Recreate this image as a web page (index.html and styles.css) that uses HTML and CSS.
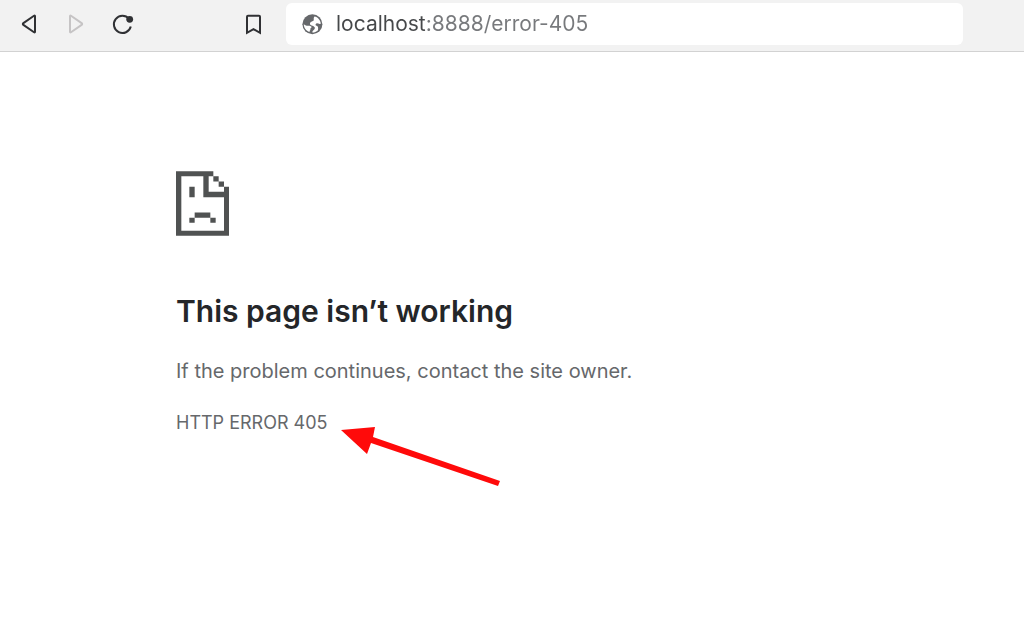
FILE: index.html
```html
<!DOCTYPE html>
<html lang="en">
<head>
<meta charset="utf-8">
<meta name="viewport" content="width=device-width, initial-scale=1">
<title>localhost</title>
<link rel="stylesheet" href="styles.css">
</head>
<body>
<header class="toolbar">
  <nav class="nav" aria-label="Browser">
    <button class="tool" type="button" aria-label="Back">
      <svg width="24" height="24" viewBox="0 0 24 24"><path d="M17 4.2V19.8Q17 20.8 16 20.2L5.4 12.9Q4.3 12 5.4 11.1L16 3.8Q17 3.2 17 4.2Z"/></svg>
    </button>
    <button class="tool" type="button" aria-label="Forward" disabled>
      <svg width="24" height="24" viewBox="0 0 24 24"><path d="M6 4.2V19.8Q6 20.8 7 20.2L17.6 12.9Q18.7 12 17.6 11.1L7 3.8Q6 3.2 6 4.2Z"/></svg>
    </button>
    <button class="tool" type="button" aria-label="Reload">
      <svg width="24" height="24" viewBox="0 0 24 24"><path d="M19 6.8A8.6 8.6 0 1 0 20.8 14.6"/><circle class="dot" cx="19.7" cy="7.3" r="3.4"/></svg>
    </button>
  </nav>
  <button class="tool" type="button" aria-label="Bookmark">
    <svg width="24" height="24" viewBox="0 0 24 24"><path d="M6 3.8H17Q18 3.8 18 4.8V20.8L11.5 17.2L5 20.8V4.8Q5 3.8 6 3.8Z"/></svg>
  </button>
  <div class="address">
    <svg class="globe" width="24" height="24" viewBox="0 0 24 24" aria-hidden="true"><circle cx="12.4" cy="12.3" r="10"/><path d="M3.8 12.2C7.5 15.4 9.2 12.6 11.2 14.4C12.4 15.5 10.2 15.6 10.4 17.2C10.6 18.4 9.4 18.2 9.6 20C6 18.8 3.8 15.8 3.8 12.2ZM14.5 4.4C17.8 5 20.4 8 20.8 11.4C19.4 12.8 18 10.8 16.4 11.4C15.2 11.9 15.4 13.4 16.6 13.8C18 14.3 18.4 15.4 18 18.2C16.4 19.8 14.4 20.6 12.4 20.6C12.2 18.4 15.4 17.6 14.8 15.6C14.2 13.4 10.8 14 10 12.2C9.4 10.4 11.4 9.6 13 9C14.8 8.2 12.8 6.4 14.5 4.4Z"/></svg>
    <input class="url" type="text" aria-label="Address" value="localhost:8888/error-405" spellcheck="false">
  </div>
</header>
<main class="error">
  <svg class="sad" width="53" height="65" viewBox="0 0 159 194" role="img" aria-label="Page unavailable"><path d="M0 0H112V15H128V31H144V47H159V194H0ZM16 15V179H144V78H82V15ZM98 15V62H144V47H128V31H112V15ZM40 47H56V78H40ZM56 124H103V140H56ZM40 140H56V155H40ZM103 140H119V155H103Z" fill-rule="evenodd"/></svg>
  <h1 class="title">This page isn’t working</h1>
  <p class="text">If the problem continues, contact the site owner.</p>
  <p class="code">HTTP ERROR 405</p>
</main>
<svg class="arrow" width="160" height="61" viewBox="0 0 160 61" aria-hidden="true"><path d="M0 4L34 1L32 11L159 55L157 60L30 17L26 28Z"/></svg>
</body>
</html>
```
FILE: styles.css
```css
* { box-sizing: border-box; }
body {
  margin: 0;
  background: #fff;
  color: #66686b;
  font-family: Inter, "Liberation Sans", sans-serif;
}
.toolbar {
  display: flex;
  align-items: center;
  height: 52px;
  padding: 0 61px 3px 18px;
  background: #f2f2f2;
  border-bottom: 1px solid #d2d2d2;
}
.nav {
  display: flex;
  gap: 22px;
  margin-right: 108px;
}
.tool {
  display: block;
  width: 24px;
  height: 24px;
  padding: 0;
  border: 0;
  background: none;
}
.tool svg {
  display: block;
  fill: none;
  stroke: #303134;
  stroke-width: 2;
}
.tool:disabled svg { stroke: #c6c4c5; }
.tool .dot { fill: #303134; stroke: none; }
.address {
  display: flex;
  flex: 1;
  align-items: center;
  gap: 12px;
  height: 42px;
  margin-left: 20px;
  padding: 0 14px;
  border-radius: 6px;
  background: #fff;
}
.globe { fill: #fff; flex: none; }
.globe circle { fill: #66686b; }
.url {
  flex: 1;
  min-width: 0;
  padding: 0;
  border: 0;
  outline: 0;
  background: linear-gradient(to right, #46484a 90px, #77797c 90px);
  background-clip: text;
  color: transparent;
  font-family: inherit;
  font-size: 21px;
  line-height: 28px;
}
.error {
  padding: 119px 48px 48px 176px;
}
.sad {
  display: block;
  fill: #505252;
}
.title {
  margin: 54px 0 0;
  color: #242629;
  font-size: 30px;
  font-weight: 600;
  line-height: 42px;
}
.text {
  margin: 24px 0 0;
  font-size: 20px;
  line-height: 30px;
}
.code {
  margin: 25px 0 0;
  font-size: 18px;
  line-height: 24px;
}
.arrow {
  position: absolute;
  left: 341px;
  top: 426px;
  fill: #ff0a0a;
}
```
